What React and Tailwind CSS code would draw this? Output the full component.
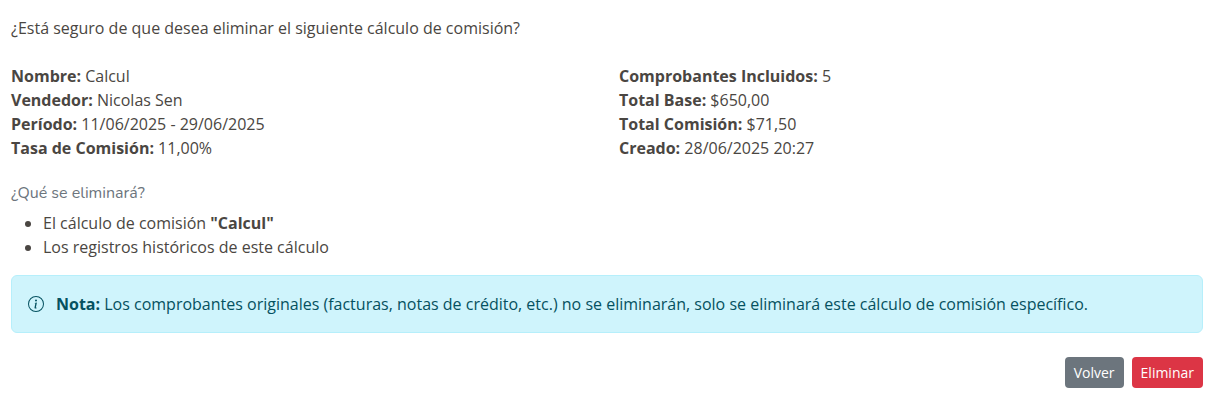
const leftRows = [
  ["Nombre:", "Calcul"],
  ["Vendedor:", "Nicolas Sen"],
  ["Período:", "11/06/2025 - 29/06/2025"],
  ["Tasa de Comisión:", "11,00%"],
];

const rightRows = [
  ["Comprobantes Incluidos:", "5"],
  ["Total Base:", "$650,00"],
  ["Total Comisión:", "$71,50"],
  ["Creado:", "28/06/2025 20:27"],
];

function InfoColumn({ rows, className }) {
  return (
    <div className={className}>
      {rows.map(([label, value]) => (
        <div key={label} className="h-6 leading-6">
          <strong className="font-bold">{label}</strong> {value}
        </div>
      ))}
    </div>
  );
}

export default function App() {
  return (
    <div className="min-h-[402px] bg-white pl-[11px] pr-[6px] pt-4 font-['Open_Sans',sans-serif] text-base text-[#4a4642]">
      <p className="h-6 leading-6">¿Está seguro de que desea eliminar el siguiente cálculo de comisión?</p>

      <div className="mt-6 flex">
        <InfoColumn rows={leftRows} className="w-[608px]" />
        <InfoColumn rows={rightRows} className="flex-1" />
      </div>

      <h6 className="mt-[21px] h-6 font-['Nunito','Lato',sans-serif] text-base leading-6 text-[#6c757d]">¿Qué se eliminará?</h6>

      <ul className="mt-[6px] list-disc pl-8">
        <li className="h-6 leading-6">El cálculo de comisión <strong className="font-bold">"Calcul"</strong></li>
        <li className="h-6 leading-6">Los registros históricos de este cálculo</li>
      </ul>

      <div className="mt-4 flex h-[58px] items-center rounded-md border border-[#b6effb] bg-[#cff4fc] pl-4 text-[#055160]">
        <svg width="16" height="16" viewBox="0 0 16 16" fill="currentColor" className="mr-3 shrink-0">
          <path d="M8 15A7 7 0 1 1 8 1a7 7 0 0 1 0 14zm0 1A8 8 0 1 0 8 0a8 8 0 0 0 0 16z" />
          <path d="m8.93 6.588-2.29.287-.082.38.45.083c.294.07.352.176.288.469l-.738 3.468c-.194.897.105 1.319.808 1.319.545 0 1.178-.252 1.465-.598l.088-.416c-.2.176-.492.246-.686.246-.275 0-.375-.193-.304-.533L8.93 6.588zM9 4.5a1 1 0 1 1-2 0 1 1 0 0 1 2 0z" />
        </svg>
        <span><strong className="font-bold">Nota:</strong> Los comprobantes originales (facturas, notas de crédito, etc.) no se eliminarán, solo se eliminará este cálculo de comisión específico.</span>
      </div>

      <div className="mt-6 flex justify-end gap-2">
        <button className="h-[31px] rounded-[4px] bg-[#6c757d] px-[9px] text-sm text-white">Volver</button>
        <button className="h-[31px] rounded-[4px] bg-[#dc3545] px-[9px] text-sm text-white">Eliminar</button>
      </div>
    </div>
  );
}
